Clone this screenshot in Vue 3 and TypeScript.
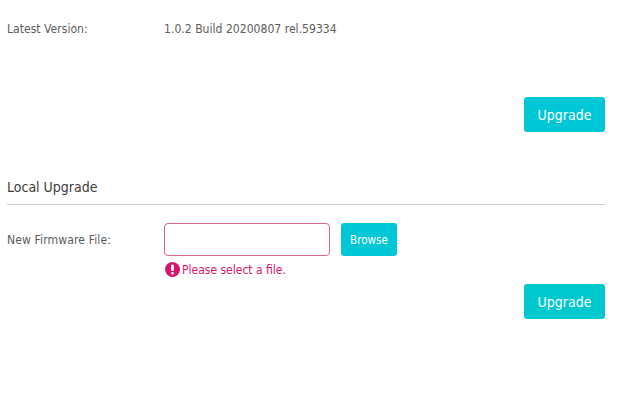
<script setup lang="ts">
const version: string = '1.0.2 Build 20200807 rel.59334'
</script>

<template>
  <main class="page">
    <section class="row version-row">
      <span class="label">Latest Version:</span>
      <span class="value">{{ version }}</span>
    </section>
    <div class="actions first">
      <button class="btn upgrade" type="button">Upgrade</button>
    </div>
    <h2 class="heading">Local Upgrade</h2>
    <section class="row file-row">
      <label class="label wide" for="fw">New Firmware File:</label>
      <div class="field">
        <div class="controls">
          <input id="fw" class="file-input" type="text" />
          <button class="btn browse" type="button">Browse</button>
        </div>
        <div class="error">
          <svg class="err-icon" viewBox="0 0 14 14" aria-hidden="true">
            <circle cx="7" cy="7" r="7" fill="#d6156c" />
            <rect x="5.7" y="2.4" width="2.6" height="6" rx="1.1" fill="#fff" />
            <circle cx="7" cy="10.6" r="1.3" fill="#fff" />
          </svg>
          <span>Please select a file.</span>
        </div>
      </div>
    </section>
    <div class="actions second">
      <button class="btn upgrade alt" type="button">Upgrade</button>
    </div>
  </main>
</template>

<style>
html, body { margin: 0; background: #fff; }
</style>

<style scoped>
.page {
  width: 644px;
  height: 402px;
  box-sizing: border-box;
  padding: 20px 39px 0 7px;
  font-family: "DejaVu Sans Condensed", "DejaVu Sans", sans-serif;
  font-stretch: condensed;
  font-size: 12.1px;
  color: #5c5c5c;
  overflow: hidden;
}
.row { display: flex; }
.version-row { height: 17px; align-items: center; }
.label { width: 157px; flex: none; }
.label.wide { letter-spacing: 0.1px; }
.actions { display: flex; justify-content: flex-end; }
.actions.first { margin-top: 60px; }
.actions.second { margin-top: 7px; }
.btn {
  border: 0;
  margin: 0;
  padding: 0;
  border-radius: 3px;
  background: #00c7d5;
  color: #fff;
  font-family: inherit;
  font-stretch: condensed;
  cursor: pointer;
}
.upgrade { width: 81px; height: 35px; font-size: 14px; font-weight: 500; }
.upgrade.alt { background: #00c8cf; }
.browse { width: 56px; height: 33px; font-size: 11.6px; font-weight: 500; }
.heading {
  margin: 47px 0 0;
  height: 25px;
  box-sizing: content-box;
  font-size: 14px;
  line-height: 17px;
  font-weight: 400;
  color: #3c3c3c;
  border-bottom: 1px solid #cfcfcf;
}
.file-row { margin-top: 18px; }
.file-row .label { line-height: 34px; }
.controls { display: flex; gap: 11px; }
.file-input {
  width: 166px;
  height: 33px;
  box-sizing: border-box;
  margin: 0;
  padding: 0 8px;
  border: 1.5px solid #d9648f;
  border-radius: 4px;
  background: #fff;
  outline: none;
}
.error {
  display: flex;
  align-items: center;
  gap: 2px;
  margin-top: 6px;
  padding-left: 1px;
  height: 15px;
  font-size: 12px;
  color: #d6156c;
}
.err-icon { width: 15px; height: 15px; flex: none; }
</style>
